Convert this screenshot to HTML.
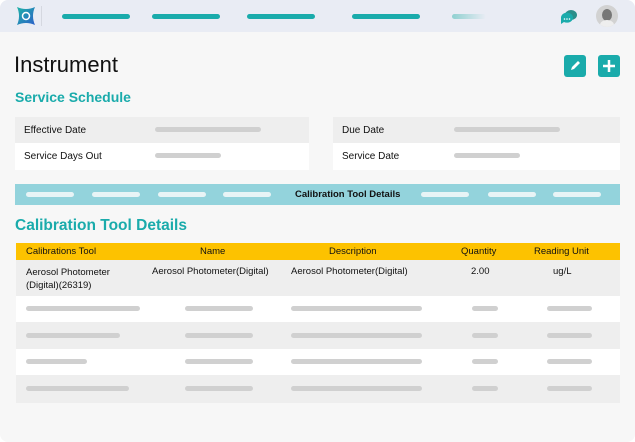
<!DOCTYPE html>
<html><head><style>
*{margin:0;padding:0;box-sizing:border-box}
body{width:635px;height:442px;background:#fff;font-family:"Liberation Sans",sans-serif;position:relative;overflow:hidden}
.page{position:absolute;left:0;top:0;width:635px;height:442px;background:#f7f7f7;border-radius:8px;overflow:hidden}
.hdr{position:absolute;left:0;top:0;width:635px;height:32px;background:#e9ecf4}
.a{position:absolute}
.bar{position:absolute;height:5px;border-radius:3px;background:#1aabab}
.g{position:absolute;height:5px;border-radius:3px;background:#d0d0d0}
.w{position:absolute;height:5px;border-radius:3px;background:#e8f4f6;top:192px}
.t{position:absolute;font-size:10px;color:#111}
.teal{color:#1aabab;font-weight:bold}
</style></head><body>
<div class="page">
<div class="hdr">
<svg class="a" style="left:15px;top:5px" width="22" height="22" viewBox="0 0 22 22"><defs><linearGradient id="lg" x1="0" y1="0" x2="1" y2="1"><stop offset="0" stop-color="#1fb4a6"/><stop offset="1" stop-color="#2b5fc9"/></linearGradient></defs><path d="M2 2 Q11 6 20 2 Q16 11 20 20 Q11 16 2 20 Q6 11 2 2Z" fill="url(#lg)"/><circle cx="11" cy="11" r="3.5" fill="none" stroke="#fff" stroke-width="1.5"/></svg>
<div class="a" style="left:41px;top:6px;width:1px;height:20px;background:#d5d8e0"></div>
<div class="bar" style="left:62px;top:14px;width:68px"></div>
<div class="bar" style="left:152px;top:14px;width:68px"></div>
<div class="bar" style="left:247px;top:14px;width:68px"></div>
<div class="bar" style="left:352px;top:14px;width:68px"></div>
<div class="bar" style="left:452px;top:14px;width:34px;background:linear-gradient(90deg,#8fd0d0,#e9ecf4)"></div>
<svg class="a" style="left:560px;top:9px" width="18" height="16" viewBox="0 0 18 16"><ellipse cx="11" cy="6" rx="6" ry="5" fill="#2a8f8a"/><path d="M1 9 a6 5 0 1 1 3 4 L1 15Z" fill="#1aabab"/><circle cx="4.5" cy="10" r=".8" fill="#fff"/><circle cx="7" cy="10" r=".8" fill="#fff"/><circle cx="9.5" cy="10" r=".8" fill="#fff"/></svg>
<div class="a" style="left:596px;top:5px;width:22px;height:22px;border-radius:50%;background:#d2d2d2;overflow:hidden"><div class="a" style="left:6px;top:4px;width:10px;height:12px;border-radius:50%;background:#777"></div><div class="a" style="left:4px;top:15px;width:14px;height:10px;border-radius:50%;background:#eee"></div></div>
</div>
<div class="a" style="left:14px;top:52px;font-size:22px;color:#111">Instrument</div>
<div class="a" style="left:564px;top:55px;width:22px;height:22px;border-radius:3px;background:#1aabab"><svg width="22" height="22"><path d="M7 15 L8 12 L14 6 L16 8 L10 14Z" fill="#fff"/></svg></div>
<div class="a" style="left:598px;top:55px;width:22px;height:22px;border-radius:3px;background:#1aabab"><svg width="22" height="22"><path d="M11 5V17M5 11H17" stroke="#fff" stroke-width="2.5"/></svg></div>
<div class="a teal" style="left:15px;top:89px;font-size:14px">Service Schedule</div>
<div class="a" style="left:15px;top:117px;width:294px;height:26px;background:#eee"></div>
<div class="a" style="left:15px;top:143px;width:294px;height:27px;background:#fff"></div>
<div class="a" style="left:333px;top:117px;width:287px;height:26px;background:#eee"></div>
<div class="a" style="left:333px;top:143px;width:287px;height:27px;background:#fff"></div>
<div class="t" style="left:24px;top:125px">Effective Date</div>
<div class="t" style="left:24px;top:151px">Service Days Out</div>
<div class="t" style="left:342px;top:125px">Due Date</div>
<div class="t" style="left:342px;top:151px">Service Date</div>
<div class="g" style="left:155px;top:127px;width:106px"></div>
<div class="g" style="left:155px;top:153px;width:66px"></div>
<div class="g" style="left:454px;top:127px;width:106px"></div>
<div class="g" style="left:454px;top:153px;width:66px"></div>
<div class="a" style="left:15px;top:184px;width:605px;height:21px;background:#93d3dc"></div>
<div class="w" style="left:26px;width:48px"></div><div class="w" style="left:92px;width:48px"></div><div class="w" style="left:158px;width:48px"></div><div class="w" style="left:223px;width:48px"></div>
<div class="w" style="left:421px;width:48px"></div><div class="w" style="left:488px;width:48px"></div><div class="w" style="left:553px;width:48px"></div>
<div class="t" style="left:295px;top:189px;font-weight:bold;font-size:9.5px">Calibration Tool Details</div>
<div class="a teal" style="left:15px;top:217px;font-size:15.5px">Calibration Tool Details</div>
<div class="a" style="left:16px;top:243px;width:604px;height:17px;background:#fdc200"></div>
<div class="t" style="left:26px;top:246px;font-size:9.5px">Calibrations Tool</div>
<div class="t" style="left:200px;top:246px;font-size:9.5px">Name</div>
<div class="t" style="left:329px;top:246px;font-size:9.5px">Description</div>
<div class="t" style="left:461px;top:246px;font-size:9.5px">Quantity</div>
<div class="t" style="left:534px;top:246px;font-size:9.5px">Reading Unit</div>
<div class="a" style="left:16px;top:260px;width:604px;height:36px;background:#eee"></div>
<div class="a" style="left:16px;top:296px;width:604px;height:26px;background:#fff"></div>
<div class="a" style="left:16px;top:322px;width:604px;height:27px;background:#eee"></div>
<div class="a" style="left:16px;top:349px;width:604px;height:26px;background:#fff"></div>
<div class="a" style="left:16px;top:375px;width:604px;height:28px;background:#eee"></div>
<div class="t" style="left:26px;top:266px;font-size:9.5px;line-height:13px">Aerosol Photometer<br>(Digital)(26319)</div>
<div class="t" style="left:152px;top:266px;font-size:9.5px">Aerosol Photometer(Digital)</div>
<div class="t" style="left:291px;top:266px;font-size:9.5px">Aerosol Photometer(Digital)</div>
<div class="t" style="left:471px;top:266px;font-size:9.5px">2.00</div>
<div class="t" style="left:553px;top:266px;font-size:9.5px">ug/L</div>
<div class="g" style="left:26px;top:306px;width:114px"></div><div class="g" style="left:185px;top:306px;width:68px"></div><div class="g" style="left:291px;top:306px;width:131px"></div><div class="g" style="left:472px;top:306px;width:26px"></div><div class="g" style="left:547px;top:306px;width:45px"></div>
<div class="g" style="left:26px;top:333px;width:94px"></div><div class="g" style="left:185px;top:333px;width:68px"></div><div class="g" style="left:291px;top:333px;width:131px"></div><div class="g" style="left:472px;top:333px;width:26px"></div><div class="g" style="left:547px;top:333px;width:45px"></div>
<div class="g" style="left:26px;top:359px;width:61px"></div><div class="g" style="left:185px;top:359px;width:68px"></div><div class="g" style="left:291px;top:359px;width:131px"></div><div class="g" style="left:472px;top:359px;width:26px"></div><div class="g" style="left:547px;top:359px;width:45px"></div>
<div class="g" style="left:26px;top:386px;width:103px"></div><div class="g" style="left:185px;top:386px;width:68px"></div><div class="g" style="left:291px;top:386px;width:131px"></div><div class="g" style="left:472px;top:386px;width:26px"></div><div class="g" style="left:547px;top:386px;width:45px"></div>
</div>
</body></html>
